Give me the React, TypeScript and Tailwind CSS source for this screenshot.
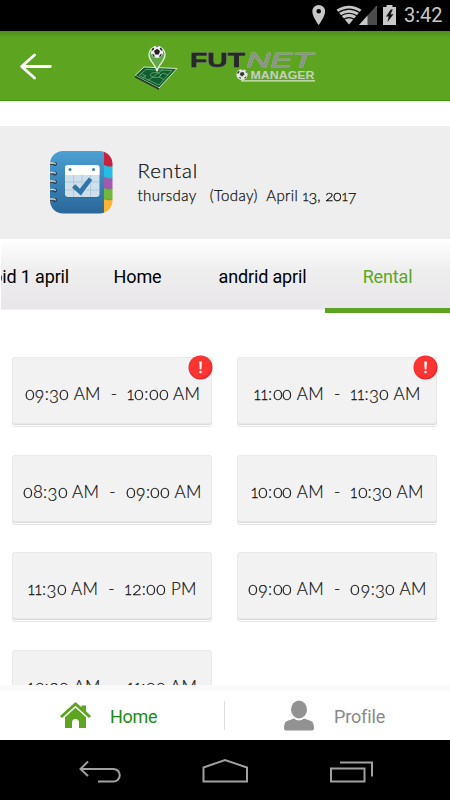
import React from "react";

const raised = "inline-block text-[0.82em] leading-none scale-x-[1.15] px-[0.055em] [-webkit-text-stroke:0.3px_#111]";
const one = "inline-block text-[0.82em] leading-none -mx-[0.05em] [-webkit-text-stroke:0.3px_#111]";
const lowered = "relative top-[0.18em] inline-block leading-none";

/* Text whose numerals are set in old style: 0-2 at x-height, 3, 4, 5, 7 and 9 descending. */
function OldStyle({ text }: { text: string }) {
  return (
    <>
      {text.split("").map((c, i) => {
        if (c === "1") return <span key={i} className={one}>{c}</span>;
        if ("02".includes(c)) return <span key={i} className={raised}>{c}</span>;
        if ("34579".includes(c)) return <span key={i} className={lowered}>{c}</span>;
        return c;
      })}
    </>
  );
}

function StatusBar() {
  return (
    <div className="flex h-[31px] items-center justify-end bg-black">
      <svg width="138" height="31" viewBox="0 0 138 31" fill="#c8c8c8">
        <path fillRule="evenodd" d="M6.700 5a6.400 6.400 0 0 0-6.400 6.400c0 4.800 6.400 13.600 6.400 13.600s6.400-8.800 6.400-13.600A6.400 6.400 0 0 0 6.700 5zm0 4a2.300 2.300 0 1 1 0 4.600 2.300 2.300 0 0 1 0-4.600z" />
        <path d="M24.500 9.800Q37 1.800 49.500 9.800L37 24.500z" />
        <g fill="none" stroke="#000" strokeWidth="1.100">
          <path d="M26 12.800Q37 5.500 48 12.800M28.500 16Q37 10.500 45.500 16M31.500 19.500Q37 15.700 42.500 19.500" />
        </g>
        <path d="M65 5v20H47z" fill="#4b4b4b" />
        <path d="M55.500 15.600V25H47z" />
        <path d="M71 7h3.500V5h6v2H84v18H71z" />
        <path d="M78.800 9.500l-4.800 7h2.700l-1.200 5.500 6-7.800h-3l2.300-4.700z" fill="#111" />
      </svg>
      <span className="-ml-[46px] mr-[6px] w-[40px] whitespace-nowrap font-[Roboto,sans-serif] text-[20px] leading-[33px] text-[#c8c8c8]">3:42</span>
    </div>
  );
}

function Logo() {
  return (
    <svg width="190" height="56" viewBox="130 38 190 56" className="ml-[75px]">
      <path d="M135 75.500l9-8.500 33 1.500-18 19.500z" fill="#105e30" stroke="#d7e8cd" strokeWidth="1" />
      <path d="M135 75.500v2l24 12.500v-2z" fill="#263a27" />
      <path d="M139 75.500l7-6 26 1-13 14.500zM148 80.500l15-11M141 73.500l5 2.500-4 2M168 75l-5-2-4 4 5 2.500" fill="none" stroke="#6aab72" strokeWidth=".8" />
      <ellipse cx="155.500" cy="75" rx="5" ry="2.500" fill="none" stroke="#75b77c" strokeWidth=".7" />
      <path d="M157 71.500c-1-7-8-10-8-17a8 8 0 0 1 16 0c0 7-7 10-8 17z" fill="#65a84a" stroke="#e9f4e4" strokeWidth="1.300" />
      <circle cx="157" cy="52" r="6.100" fill="#eee" />
      <path d="M157 48.800l3 2.200-1.200 3.500h-3.600L154 51zM151.200 50.500l1.800-3 1.300 1-1.300 2zM162.800 50.500l-1.800-3-1.300 1 1.300 2zM152 54l2 .5.800 2.500-1.500-.6zM162 54l-2 .5-.8 2.500 1.500-.6zM155.500 46.200h3l-1.500 1z" fill="#222" />
      <g fontFamily="Liberation Sans, Arial, sans-serif" className="[filter:drop-shadow(0_0_0.5px_#c5dbb9)]">
        <text x="190" y="66.800" textLength="55" lengthAdjust="spacingAndGlyphs" fontWeight="700" fontSize="21" fill="#272a2a" stroke="#272a2a" strokeWidth=".8">FUT</text>
        <text x="246.500" y="66.800" textLength="66.500" lengthAdjust="spacingAndGlyphs" fontStyle="italic" fontSize="21" fill="#8b938b" stroke="#8b938b" strokeWidth=".6">NET</text>
      </g>
      <text x="250.500" y="78.500" textLength="64" lengthAdjust="spacingAndGlyphs" fontFamily="Liberation Sans, Arial, sans-serif" fontWeight="700" fontSize="10" fill="#c5d0c2">MANAGER</text>
      <path d="M241 80.800h74" stroke="#d7e8cd" strokeWidth="1.300" />
      <circle cx="242" cy="74.500" r="5.600" fill="#e4e9e2" />
      <path d="M240.500 72.500l3-.5 1 2.500-2.500 2-2.200-1.700zM237 72.500l2-2 .5 1.500-1.500 2zM246 70.500l1.200 2.200-1.500-.3zM238.500 77.500l2-.5.500 2zM246.500 76l-1 2.500-1.500-.5zM241 69.500h3l-1.500 1z" fill="#343734" />
    </svg>
  );
}

function Header() {
  return (
    <header className="flex h-[70px] items-center border-b border-[#3f9810] bg-linear-to-b from-[#4e8c20] via-[#5da520] via-10% to-[#5da520] font-[Lato,sans-serif]">
      <svg width="35" height="30" viewBox="0 0 35 30" fill="none" stroke="#fff" strokeWidth="2.800" strokeLinecap="round" strokeLinejoin="round" className="ml-5">
        <path d="M14.500 4L1.700 15.500 14.500 27M2 15.500h28.300" />
      </svg>
      <Logo />
    </header>
  );
}

function AgendaIcon() {
  return (
    <svg width="64" height="64" viewBox="0 0 64 64">
      <defs>
        <clipPath id="book"><rect x="0" y="1" width="62.500" height="62.500" rx="13" /></clipPath>
        <linearGradient id="cover" x1="0" y1="0" x2="0" y2="1">
          <stop offset="0" stopColor="#4ba1d2" /><stop offset="1" stopColor="#296699" />
        </linearGradient>
      </defs>
      <g clipPath="url(#book)">
        <rect y="1" width="54" height="63" fill="url(#cover)" />
        <path d="M54 1h10v15Q59 18 54 15z" fill="#c8203e" />
        <path d="M54 15q5 3 10 1v12q-5 2-10-1z" fill="#27bce8" />
        <path d="M54 27q5 3 10 1v10q-5 2-10 0z" fill="#a557b2" />
        <path d="M54 38q5 2 10 0v11q-5 2-10 0z" fill="#72b83b" />
        <path d="M54 49q5 2 10 0v15H54z" fill="#fab42f" />
        <path d="M54 15q5 3 10 1M54 27q5 3 10 1M54 38q5 2 10 0M54 49q5 2 10 0" fill="none" stroke="#444" strokeOpacity=".35" />
      </g>
      {[14, 23.500, 32, 40.500, 50].map((y) => (
        <g key={y}>
          <circle cx="5" cy={y} r="2" fill="#173b59" />
          <path d={`M0 ${y - 1}h3.500q2 0 2 1.500`} fill="none" stroke="#cfcfcf" strokeWidth="1.300" />
          <path d={`M0 ${y + .5}h4`} stroke="#444" strokeWidth="1" />
        </g>
      ))}
      <rect x="15" y="15" width="34.500" height="33" rx="3" fill="#275e8d" opacity=".5" />
      <rect x="15" y="15" width="34.500" height="32" rx="3" fill="#cfdfeb" />
      <path d="M15 25v-7q0-3 3-3h28.500q3 0 3 3v7z" fill="#fff" />
      <path d="M23.500 25v22M32 25v22M40.500 25v22M15 32h34.500M15 40h34.500" stroke="#abc5d8" strokeWidth=".9" />
      <circle cx="20" cy="19.500" r="1.500" fill="#3580b4" /><circle cx="43.500" cy="19.500" r="1.500" fill="#3580b4" />
      <path d="M22 37.500l3.300-3.200 4.500 4.500 9-11.300 3.500 2.500-11.500 15.500z" fill="#2d75aa" />
    </svg>
  );
}

function Tab({ label, className }: { label: string; className: string }) {
  return <div className={`flex shrink-0 items-center justify-center whitespace-nowrap tracking-[-0.15px] ${className}`}><span>{label}</span></div>;
}

function Slot({ from, to, alert }: { from: string; to: string; alert?: boolean }) {
  return (
    <div className="relative flex h-[67px] items-center justify-center rounded-[3px] border border-[#e9e9e9] bg-[#f2f2f2] shadow-[0_1px_0_#d9d9d9,0_2px_0_#fff,0_3px_0_#e3e3e3]">
      <span className="mt-[7px] whitespace-pre font-[Lato,sans-serif] text-[17px] font-light leading-[22px] tracking-[0.33px] text-[#111] [-webkit-text-stroke:0.2px_#111]">
        <OldStyle text={from} />{"  -  "}<OldStyle text={to} />
      </span>
      {alert && (
        <svg width="25" height="25" viewBox="0 0 25 25" className="absolute -right-[2px] -top-[3px]">
          <circle cx="12.500" cy="12.500" r="12" fill="#ed2529" />
          <circle cx="12" cy="12" r="11" fill="#fc3533" />
          <path d="M11.200 6.500h2.700l-.5 7.800h-1.700z" fill="#fff" />
          <circle cx="12.500" cy="17" r="1.300" fill="#fff" />
        </svg>
      )}
    </div>
  );
}

const slots = [
  { from: "09:30 AM", to: "10:00 AM", alert: true },
  { from: "11:00 AM", to: "11:30 AM", alert: true },
  { from: "08:30 AM", to: "09:00 AM" },
  { from: "10:00 AM", to: "10:30 AM" },
  { from: "11:30 AM", to: "12:00 PM" },
  { from: "09:00 AM", to: "09:30 AM" },
  { from: "10:30 AM", to: "11:00 AM" },
];

function SystemBar() {
  return (
    <div className="flex h-[60px] items-center bg-black">
      <svg width="450" height="60" viewBox="0 740 450 60" fill="none" stroke="#a0a0a0" strokeWidth="2">
        <path d="M88 761.500l-7.500 7.500 7.500 7M81 769h32.500a6.250 6.250 0 0 1 0 12.500H98" />
        <path d="M203.500 781.500v-14l21.500-7.500 22 7.500v14z" />
        <path d="M331 768.500h33.500v13H331zM340 762.500h32v14" />
      </svg>
    </div>
  );
}

export default function App() {
  return (
    <div className="flex h-[800px] w-[450px] flex-col overflow-hidden bg-white font-[Roboto,sans-serif]">
      <StatusBar />
      <Header />
      <section className="mt-[25px] flex h-[113px] items-center bg-[#eee]">
        <div className="ml-[50px] mt-[-1px]"><AgendaIcon /></div>
        <div className="ml-[23.500px] mt-[1px] whitespace-pre font-[Lato,sans-serif] font-light text-[#111] [-webkit-text-stroke:0.25px_#111]">
          <div className="text-[20.500px] leading-[25px] tracking-[0.95px]">Rental</div>
          <div className="text-[15px] leading-[25px]">
            <span className="tracking-[0.38px]">thursday{"   "}(Today){"  "}April </span>
            <span className="tracking-[0.05px]"><OldStyle text="13, 2017" /></span>
          </div>
        </div>
      </section>
      <div className="flex h-[74px] shrink-0">
        <div className="w-px" />
        <nav className="flex h-[71px] w-[449px] justify-end overflow-hidden border-b border-[#f3f2f3] bg-linear-to-b from-white via-[#efeeef] via-45% to-[#e8e6e8] text-[18px] text-black">
          <Tab label="android 1 april" className="w-[124px] pt-[5px]" />
          <Tab label="Home" className="w-[125px] pt-[5px]" />
          <Tab label="andrid april" className="w-[125px] pt-[5px]" />
          <Tab label="Rental" className="w-[125px] pt-[5px] text-[#5aa61f]" />
        </nav>
        <div className="-ml-[125px] mt-[69px] h-[5px] w-[125px] shrink-0 bg-[#5da520]" />
      </div>
      <main className="grid h-[372px] shrink-0 auto-rows-[67px] grid-cols-[200px_200px] gap-x-[25px] gap-y-[30.600px] overflow-hidden pl-[12.400px] pt-[44px]">
        {slots.map((slot) => <Slot key={slot.from + slot.to} {...slot} />)}
      </main>
      <footer className="flex h-[55px] shrink-0 border-t-[6px] border-[#fafafa] bg-white text-[18px]">
        <div className="flex w-[224px] items-center pl-[60px] text-[#1c8c10]">
          <svg width="31" height="27" viewBox="0 0 31 27" fill="#5da520">
            <path d="M15.500 0l6 5.300V3.500H26v5.800l5 4.600-2 2L15.500 3.700 2 15.900l-2-2z" />
            <path d="M15.500 5.700L26 15.200V26h-7v-5.500a3.500 3.500 0 0 0-7 0V26H5V15.200z" />
          </svg>
          <span className="ml-[19px] mt-px tracking-[-0.3px]">Home</span>
        </div>
        <div className="my-2.5 w-px bg-[#ddd]" />
        <div className="flex items-center pl-[59px] text-[#898989]">
          <svg width="30" height="31" viewBox="0 0 30 31" fill="#929292">
            <ellipse cx="15" cy="9.500" rx="8" ry="9" />
            <path d="M0 28.500Q0 22 3 21l7-2.500q5 4 10 0l7 2.500q3 1 3 7.500 0 2-2 2H2q-2 0-2-2z" />
          </svg>
          <span className="ml-[20px] mt-px tracking-[-0.15px]">Profile</span>
        </div>
      </footer>
      <SystemBar />
    </div>
  );
}
